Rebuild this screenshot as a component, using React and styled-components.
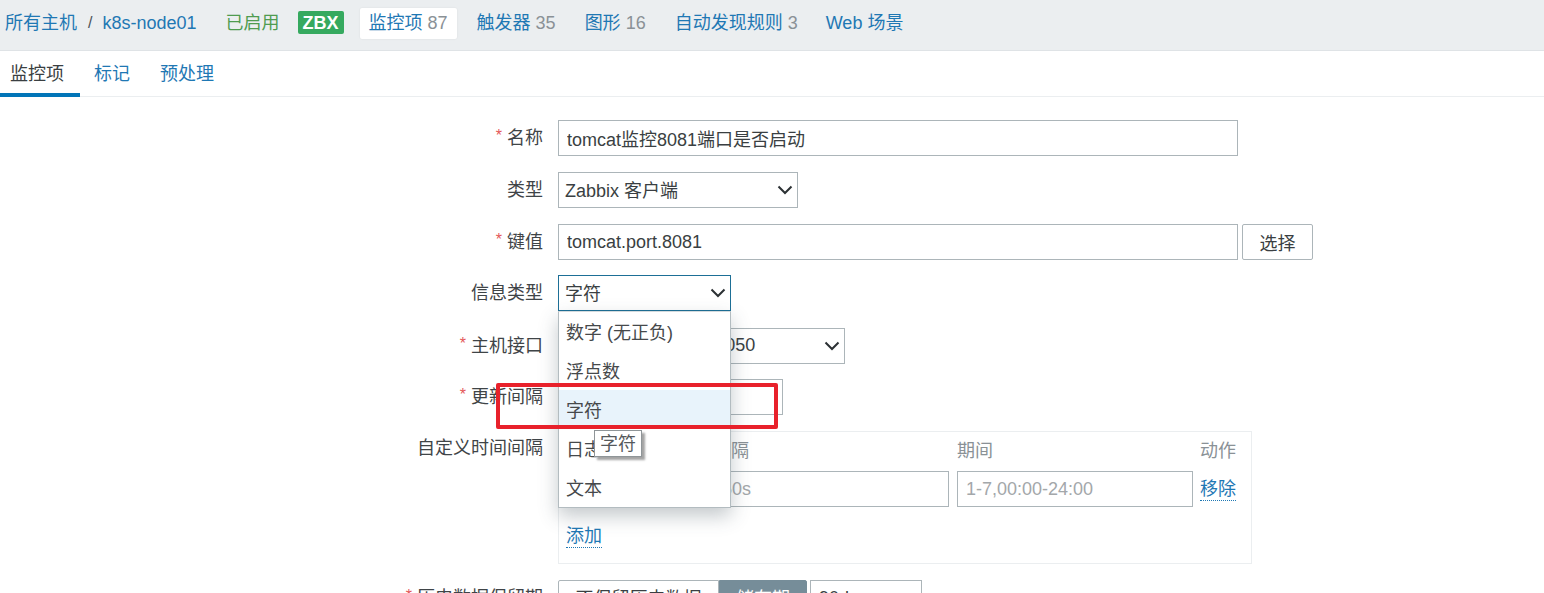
import React from "react";
import styled, { createGlobalStyle } from "styled-components";

const Global = createGlobalStyle`
  html, body { margin: 0; padding: 0; height: 593px; overflow: hidden; background: #fff; }
  body { font-family: "Liberation Sans", "Noto Sans CJK SC", sans-serif; font-size: 18px; color: #3a3f42; }
  #root { height: 593px; overflow: hidden; }
`;

const Page = styled.div`position: relative; height: 593px; overflow: hidden;`;

const Header = styled.nav`
  display: flex; align-items: center; height: 45px; padding: 0 0 5px 5px;
  background: #ebeef0; border-bottom: 1px solid #dfe3e6; box-sizing: content-box;
`;
const Link = styled.a`color: #1f78b4; white-space: nowrap; line-height: 22px;`;
const Sep = styled.span`margin: 0 10px 0 11px; color: #4a5358; font-size: 16px;`;
const Status = styled.span`color: #4f9c50; margin-left: 29px; line-height: 22px;`;
const Badge = styled.span`
  margin-left: 18px; width: 46px; height: 23px; border-radius: 2px; background: #35a95f; color: #fff;
  font-size: 18px; font-weight: 700; line-height: 24px; text-align: center;
`;
const NavItem = styled.a`
  white-space: nowrap; color: #1f78b4; line-height: 22px;
  margin-left: ${p => p.$left}px;
  ${p => p.$active && "background:#fff; border-radius:2px; padding:4px 9px 5px; margin-top:2px; box-shadow:0 0 2px rgba(0,0,0,.08);"}
`;
const Count = styled.span`color: #8a9196;`;

const Tabs = styled.div`display: flex; height: 45px; border-bottom: 1px solid #ebeef0; box-sizing: content-box;`;
const Tab = styled.a`
  box-sizing: border-box; height: 46px; padding: 12px ${p => p.$right}px 0 ${p => p.$left}px; line-height: 22px;
  color: ${p => p.$active ? "#3a3f42" : "#1f78b4"};
  border-bottom: ${p => p.$active ? "4px solid #0275b8" : "none"};
`;

const Form = styled.div`padding-top: 23px;`;
const Row = styled.div`
  display: grid; grid-template-columns: 543px 1fr; column-gap: 15px; align-items: start;
  margin-top: ${p => p.$top ?? 16}px;
`;
const Label = styled.label`
  display: block; text-align: right; line-height: ${p => p.$lh ?? 36}px; white-space: nowrap; color: #3f4447;
`;
const Star = styled.span`color: #e45959; font-size: 16px; line-height: 0; margin-right: 5px; vertical-align: 3px;`;
const Field = styled.div`display: flex; align-items: flex-start; position: relative;`;
const Input = styled.input`
  box-sizing: border-box; width: ${p => p.$w}px; height: 36px; padding: 0 8px; margin: 0 0 0 ${p => p.$gap ?? 0}px;
  border: 1px solid #acb5b9; border-radius: 0; background: #fff; outline: none;
  font: 18px "Liberation Sans", "Noto Sans CJK SC", sans-serif; color: #3a3f42;
  &::placeholder { color: #a3a7aa; opacity: 1; }
`;
const Select = styled.div`
  box-sizing: border-box; width: ${p => p.$w}px; height: 36px; padding: 0 4px 0 6px;
  display: flex; align-items: center; justify-content: space-between; white-space: nowrap; overflow: hidden;
  border: 1px solid ${p => p.$open ? "#1d6f96" : "#acb5b9"}; background: #fff; color: #3a3f42;
`;
const SelectText = styled.span`padding-bottom: 2px;`;
const Chevron = () => (
  <svg width="16" height="10" viewBox="0 0 16 10" style={{ flex: "none" }}>
    <path d="M1.5 1.5 L8 8 L14.5 1.5" fill="none" stroke="#2c3134" strokeWidth="2" />
  </svg>
);
const Button = styled.button`
  box-sizing: border-box; width: 71px; height: 36px; margin-left: 4px; padding: 0;
  border: 1px solid #acb5b9; border-radius: 2px; background: #fff; color: #3a3f42;
  font: 18px "Liberation Sans", "Noto Sans CJK SC", sans-serif;
`;

const Menu = styled.ul`
  position: absolute; z-index: 5; left: 0; top: 36px; width: 173px; box-sizing: border-box;
  margin: 0; padding: 0; list-style: none; background: #fff;
  border: 1px solid #b3bcc0; border-top-color: #d4dadd;
  box-shadow: 0 8px 18px rgba(60, 75, 85, .3);
`;
const MenuItem = styled.li`
  height: 39px; line-height: 43px; padding-left: 7px; white-space: nowrap; color: #46494b;
  background: ${p => p.$hover ? "#e8f3fb" : "#fff"};
`;
const Tooltip = styled.div`
  position: absolute; z-index: 6; left: 35px; top: 118px; box-sizing: border-box; width: 48px; height: 27px;
  background: #fff; border: 1px solid #8f9598; box-shadow: 3px 3px 2px rgba(90, 90, 90, .55);
  font-size: 18px; line-height: 27px; text-align: center; color: #55595c;
`;

const IntervalBox = styled.div`
  box-sizing: border-box; width: 694px; height: 133px; padding: 9px 8px 0;
  border: 1px solid #ebeef0;
`;
const IntervalGrid = styled.div`
  display: grid; grid-template-columns: 138px 236px 236px auto; column-gap: 8px; row-gap: 9px;
  align-items: center;
`;
const ColHead = styled.span`color: #8a9196; line-height: 21px; white-space: nowrap; margin-left: ${p => p.$shift ?? 0}px;`;
const ActionCell = styled.div`margin-left: -1px;`;
const Dotted = styled.a`
  display: inline-block; color: #1f78b4; line-height: 22px; border-bottom: 1px dotted #1f78b4;
`;
const AddRow = styled.div`margin: 18px 0 0 -1px;`;

const Segments = styled.div`display: flex; align-items: flex-start;`;
const Seg = styled.span`
  box-sizing: border-box; height: 36px; line-height: 36px; text-align: center; white-space: nowrap;
  width: ${p => p.$w}px;
  background: ${p => p.$on ? "#768d99" : "#fff"}; color: ${p => p.$on ? "#fff" : "#3a3f42"};
  border: 1px solid ${p => p.$on ? "#768d99" : "#acb5b9"};
  border-radius: ${p => p.$on ? "0 2px 2px 0" : "2px 0 0 2px"};
`;
const Annotation = styled.div`
  position: absolute; z-index: 7; left: 496px; top: 383px; width: 282px; height: 46px; box-sizing: border-box;
  border: 4px solid #e8212b; border-radius: 2px; pointer-events: none;
`;

export default function App() {
  return (
    <Page>
      <Global />
      <Header>
        <Link>所有主机</Link>
        <Sep>/</Sep>
        <Link>k8s-node01</Link>
        <Status>已启用</Status>
        <Badge>ZBX</Badge>
        <NavItem $left={16} $active>监控项 <Count>87</Count></NavItem>
        <NavItem $left={20}>触发器 <Count>35</Count></NavItem>
        <NavItem $left={29}>图形 <Count>16</Count></NavItem>
        <NavItem $left={29}>自动发现规则 <Count>3</Count></NavItem>
        <NavItem $left={28}>Web 场景</NavItem>
      </Header>
      <Tabs>
        <Tab $active $left={10} $right={16}>监控项</Tab>
        <Tab $left={14} $right={15}>标记</Tab>
        <Tab $left={15} $right={15}>预处理</Tab>
      </Tabs>
      <Form>
        <Row $top={0}>
          <Label><Star>*</Star>名称</Label>
          <Field><Input $w={680} readOnly value="tomcat监控8081端口是否启动" /></Field>
        </Row>
        <Row>
          <Label>类型</Label>
          <Field><Select $w={240}><SelectText>Zabbix 客户端</SelectText><Chevron /></Select></Field>
        </Row>
        <Row>
          <Label><Star>*</Star>键值</Label>
          <Field><Input $w={680} readOnly value="tomcat.port.8081" /><Button>选择</Button></Field>
        </Row>
        <Row $top={15}>
          <Label>信息类型</Label>
          <Field>
            <Select $w={173} $open><SelectText>字符</SelectText><Chevron /></Select>
            <Menu>
              <MenuItem>数字 (无正负)</MenuItem>
              <MenuItem>浮点数</MenuItem>
              <MenuItem $hover>字符</MenuItem>
              <MenuItem>日志</MenuItem>
              <MenuItem>文本</MenuItem>
              <Tooltip>字符</Tooltip>
            </Menu>
          </Field>
        </Row>
        <Row $top={17}>
          <Label><Star>*</Star>主机接口</Label>
          <Field><Select $w={287}><SelectText>192.168.100.50 : 10050</SelectText><Chevron /></Select></Field>
        </Row>
        <Row $top={15}>
          <Label><Star>*</Star>更新间隔</Label>
          <Field><Input $w={225} readOnly value="1m" /></Field>
        </Row>
        <Row>
          <Label $lh={34}>自定义时间间隔</Label>
          <Field>
            <IntervalBox>
              <IntervalGrid>
                <ColHead>类型</ColHead>
                <ColHead>间隔</ColHead>
                <ColHead>期间</ColHead>
                <ColHead $shift={-1}>动作</ColHead>
                <span />
                <Input $w={236} readOnly placeholder="50s" />
                <Input $w={236} readOnly placeholder="1-7,00:00-24:00" />
                <ActionCell><Dotted>移除</Dotted></ActionCell>
              </IntervalGrid>
              <AddRow><Dotted>添加</Dotted></AddRow>
            </IntervalBox>
          </Field>
        </Row>
        <Row $top={16}>
          <Label><Star>*</Star>历史数据保留期</Label>
          <Field>
            <Segments>
              <Seg $w={161}>不保留历史数据</Seg>
              <Seg $w={88} $on>储存期</Seg>
            </Segments>
            <Input $w={112} $gap={3} readOnly value="90d" />
          </Field>
        </Row>
      </Form>
      <Annotation />
    </Page>
  );
}
